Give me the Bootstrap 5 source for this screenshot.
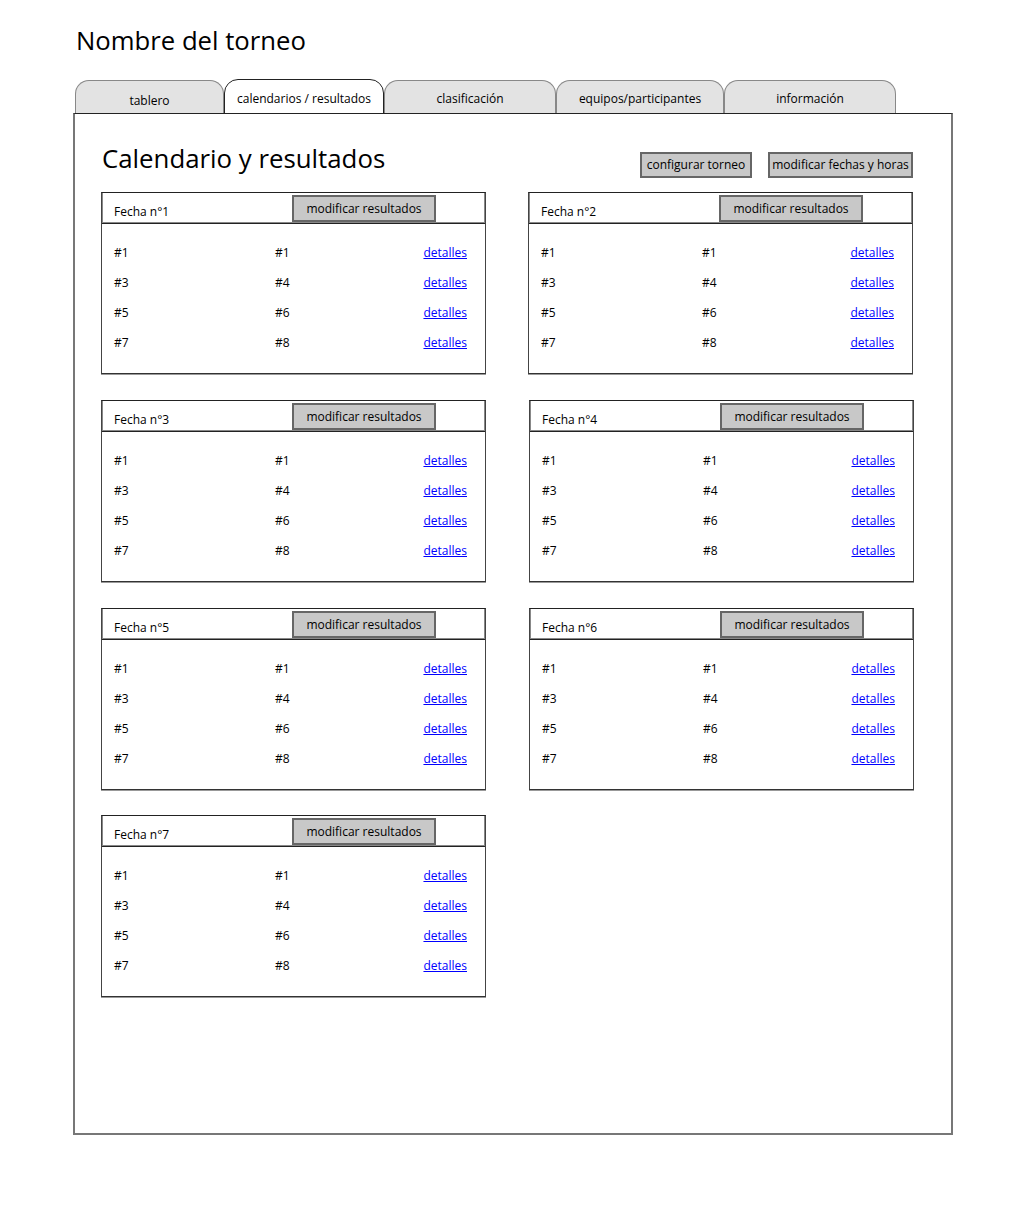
<!DOCTYPE html>
<html lang="es">

<head>
    <meta charset="UTF-8">
    <meta name="viewport" content="width=device-width, initial-scale=1.0">
    <title>Nombre del torneo</title>
    <link href="https://cdn.jsdelivr.net/npm/bootstrap@5.3.0/dist/css/bootstrap.min.css" rel="stylesheet">
    <style>
        body {
            background-color: #fff;
            color: #000;
            font-family: "Open Sans", "Liberation Sans", sans-serif;
            font-size: 12px;
        }

        .pagina {
            width: 880px;
            margin-left: 73px;
        }

        .titulo-torneo {
            font-size: 25.7px;
            line-height: 34px;
            font-weight: 400;
            margin: 0;
            padding: 24px 0 22px 3px;
        }

        .pestanas {
            border: 0;
            height: 34px;
            margin-bottom: -1px;
            margin-left: 2px;
            position: relative;
            flex-wrap: nowrap;
        }

        .pestanas .nav-link {
            height: 35px;
            padding: 10px 0 0;
            text-align: center;
            color: #000;
            background-color: #e3e3e3;
            border: 1px solid #888;
            border-bottom-color: #222;
            border-radius: 14px 14px 0 0;
            line-height: 16px;
        }

        .pestanas .nav-item:first-child .nav-link {
            padding-top: 12px;
        }

        .pestanas .nav-link.active {
            background-color: #fff;
            border-color: #222;
            height: 36px;
            margin-top: -1px;
            padding-top: 11px;
        }

        .pestanas .nav-item:nth-child(1) { width: 149px; }
        .pestanas .nav-item:nth-child(2) { width: 160px; }
        .pestanas .nav-item:nth-child(3) { width: 172px; }
        .pestanas .nav-item:nth-child(4) { width: 168px; }
        .pestanas .nav-item:nth-child(5) { width: 172px; }

        .panel-torneo {
            height: 1022px;
            border: 2px solid #777;
            border-top: 1px solid #222;
            padding: 0 0 0 26px;
            position: relative;
            background-color: #fff;
        }

        .cabecera-panel {
            height: 78px;
            width: 812px;
            padding: 27px 0 0 1px;
        }

        .cabecera-panel h2 {
            font-size: 25.8px;
            line-height: 34px;
            font-weight: 400;
            margin: 0;
        }

        .boton-gris {
            background-color: #c8c8c8;
            color: #000;
            border: 2px solid #666;
            border-radius: 0;
            padding: 0;
            font-size: 12px;
            line-height: 22px;
        }

        .boton-gris:hover {
            background-color: #bbb;
            color: #000;
            border-color: #666;
        }

        .boton-config {
            width: 112px;
            height: 26px;
            margin-top: 11px;
            margin-right: 16px;
        }

        .boton-fechas {
            width: 145px;
            height: 26px;
            margin-top: 11px;
        }

        .rejilla-fechas {
            display: grid;
            grid-template-columns: 385px 385px;
            column-gap: 43px;
            row-gap: 26px;
        }

        .ficha {
            height: 182px;
            border: 1px solid #444;
            border-top-color: #222;
            border-bottom-color: #333;
            border-radius: 0;
            box-shadow: 0 1px 0 #999;
        }

        .ficha-primera-fila {
            margin-left: -1px;
            width: 385px;
        }

        .ficha-ultima {
            margin-top: -1px;
        }

        .ficha .card-header {
            height: 31px;
            padding: 0 0 0 12px;
            background-color: #fff;
            border-bottom: 1px solid #222;
            border-radius: 0;
            box-shadow: inset 0 -1px 0 #888, inset 1px 0 0 #888, inset -1px 0 0 #888;
        }

        .etiqueta-fecha {
            width: 178px;
            padding-top: 10px;
            line-height: 18px;
        }

        .boton-resultados {
            width: 144px;
            height: 27px;
            margin-top: 2px;
        }

        .ficha .card-body {
            padding: 14px 18px 0 12px;
        }

        .partido {
            height: 30px;
        }

        .equipo-local {
            width: 161px;
        }

        .partido a {
            color: #00f;
        }
    </style>
</head>

<body>
    <div class="pagina">
        <h1 class="titulo-torneo">Nombre del torneo</h1>

        <ul class="nav nav-tabs pestanas">
            <li class="nav-item"><a class="nav-link" href="#">tablero</a></li>
            <li class="nav-item"><a class="nav-link active" href="#">calendarios / resultados</a></li>
            <li class="nav-item"><a class="nav-link" href="#">clasificación</a></li>
            <li class="nav-item"><a class="nav-link" href="#">equipos/participantes</a></li>
            <li class="nav-item"><a class="nav-link" href="#">información</a></li>
        </ul>

        <div class="panel-torneo">
            <div class="cabecera-panel d-flex justify-content-between">
                <h2>Calendario y resultados</h2>
                <div class="d-flex">
                    <button type="button" class="btn boton-gris boton-config">configurar torneo</button>
                    <button type="button" class="btn boton-gris boton-fechas">modificar fechas y horas</button>
                </div>
            </div>
            <div class="rejilla-fechas" id="rejillaFechas"></div>
        </div>
    </div>

    <script>
        const partidos = [['#1', '#1'], ['#3', '#4'], ['#5', '#6'], ['#7', '#8']];
        const rejilla = document.getElementById('rejillaFechas');

        for (let n = 1; n <= 7; n++) {
            const filas = partidos.map(p => `
                <div class="partido d-flex align-items-center">
                    <span class="equipo-local">${p[0]}</span>
                    <span class="flex-grow-1">${p[1]}</span>
                    <a href="#">detalles</a>
                </div>`).join('');

            let extra = '';
            if (n === 2) extra = ' ficha-primera-fila';
            if (n === 7) extra = ' ficha-ultima';

            rejilla.insertAdjacentHTML('beforeend', `
                <div class="card ficha${extra}">
                    <div class="card-header d-flex">
                        <span class="etiqueta-fecha">Fecha n°${n}</span>
                        <button type="button" class="btn boton-gris boton-resultados">modificar resultados</button>
                    </div>
                    <div class="card-body">${filas}</div>
                </div>`);
        }
    </script>
    <script src="https://cdn.jsdelivr.net/npm/bootstrap@5.3.0/dist/js/bootstrap.bundle.min.js"></script>
</body>

</html>
